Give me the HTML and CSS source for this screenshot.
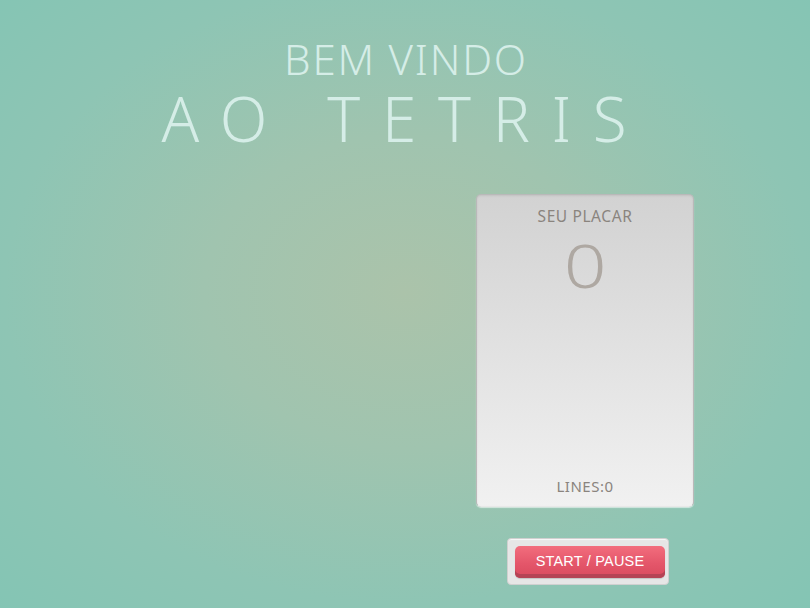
FILE: index.html
```html
<!DOCTYPE html>
<html lang="pt">
<head>
<meta charset="utf-8">
<title>Tetris</title>
<link rel="stylesheet" href="styles.css">
</head>
<body>
<div class="page">
  <header class="title">
    <h1 class="welcome">BEM VINDO</h1>
    <h2 class="game">AO TETRIS</h2>
  </header>
  <main class="game-area">
    <div class="board"></div>
    <aside class="side">
      <section class="score-panel">
        <div class="score-label">SEU PLACAR</div>
        <div class="score-value">0</div>
        <div class="lines">LINES:0</div>
      </section>
      <div class="button-wrap">
        <button class="start-btn">START / PAUSE</button>
      </div>
    </aside>
  </main>
</div>
</body>
</html>
```
FILE: styles.css
```css
html, body {
  margin: 0;
  padding: 0;
  height: 100%;
}
body {
  background: radial-gradient(ellipse at 50% 48%, #abc3aa 0%, #a0c4af 35%, #8ec5b4 70%, #84c5b4 100%);
  font-family: "Noto Sans", "Open Sans", sans-serif;
  overflow: hidden;
}
.page {
  width: 810px;
  height: 608px;
  display: flex;
  flex-direction: column;
}
.title {
  display: flex;
  flex-direction: column;
  align-items: center;
  color: #d5ede7;
  padding-top: 34px;
}
.welcome {
  margin: 0;
  font-weight: 300;
  font-size: 42px;
  line-height: 50px;
  letter-spacing: 1.8px;
  padding-left: 2px;
}
.game {
  margin: 0;
  font-weight: 300;
  font-size: 62px;
  line-height: 68px;
  letter-spacing: 21.8px;
  padding-left: 0;
}
.game-area {
  display: flex;
  padding-top: 42px;
  padding-left: 476px;
}
.board { display: none; }
.side {
  display: flex;
  flex-direction: column;
  align-items: flex-start;
}
.score-panel {
  width: 218px;
  height: 313px;
  box-sizing: border-box;
  border-radius: 5px;
  background: linear-gradient(to bottom, #d2d2d2 0%, #f1f1f1 100%);
  border: 1px solid #b9b9b9;
  border-bottom-color: #e8e8e8;
  box-shadow: 0 1px 1px rgba(255,255,255,0.6), inset 0 1px 2px rgba(0,0,0,0.08);
  display: flex;
  flex-direction: column;
  align-items: center;
  color: #8a847e;
}
.score-label {
  margin-top: 12px;
  font-size: 15.5px;
  line-height: 18px;
  letter-spacing: 0.6px;
}
.score-value {
  font-size: 60px;
  line-height: 70px;
  font-weight: 300;
  color: #aea8a2;
  margin-top: 5px;
  transform: scaleX(1.25);
}
.lines {
  margin-top: auto;
  margin-bottom: 11px;
  font-size: 15px;
  line-height: 18px;
  letter-spacing: 0.5px;
}
.button-wrap {
  margin-top: 31px;
  margin-left: 31px;
  padding: 7px 6px 8px 7px;
  background: #e6e6e6;
  border-radius: 4px;
  border: 1px solid #d0d0d0;
  box-sizing: border-box;
  width: 162px;
  height: 47px;
  box-shadow: inset 0 1px 1px rgba(255,255,255,0.7);
}
.start-btn {
  display: block;
  width: 150px;
  height: 32px;
  border: none;
  border-radius: 5px;
  background: linear-gradient(to bottom, #f26d7d 0%, #e4566a 55%, #d94a5e 100%);
  box-shadow: inset 0 -4px 0 #b54355, 0 1px 1px rgba(0,0,0,0.15);
  color: #ffffff;
  font-family: "Liberation Sans", Arial, sans-serif;
  font-size: 14.5px;
  padding: 0 0 2px 0;
  letter-spacing: 0.2px;
  cursor: pointer;
}
```
